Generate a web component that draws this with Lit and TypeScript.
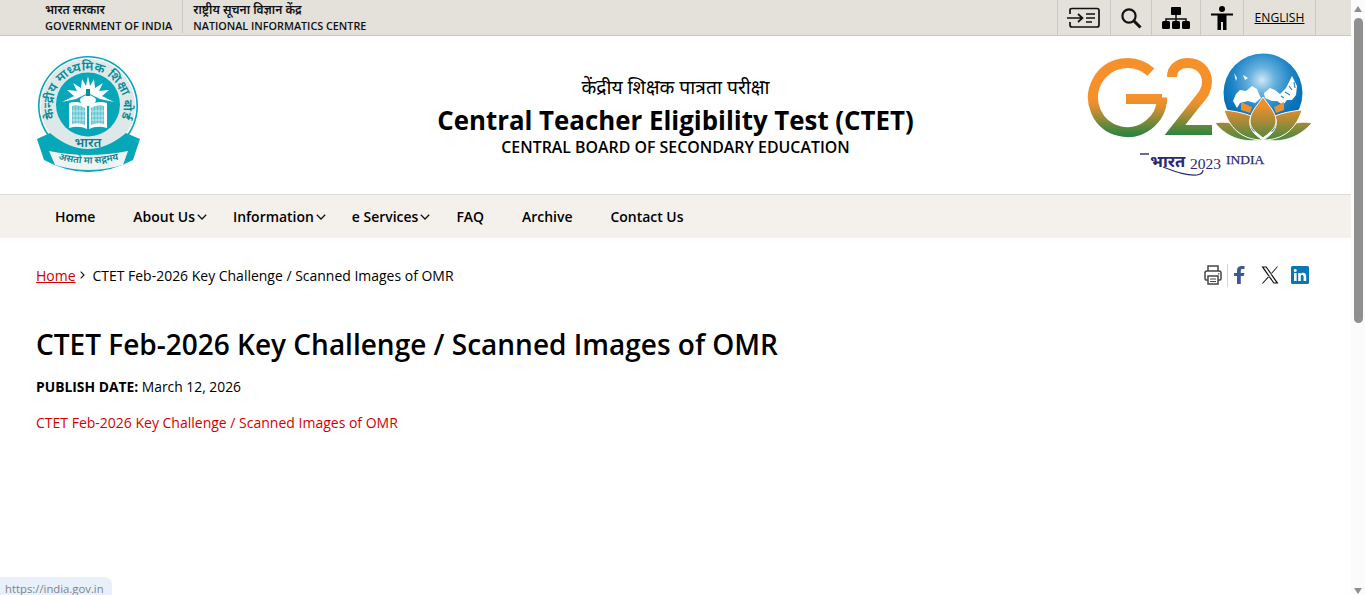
import { LitElement, html, css, svg } from "lit";
import { customElement } from "lit/decorators.js";

const emblem = svg`<svg class="emblem" viewBox="36 54 106 120" width="106" height="120" aria-hidden="true">
  <defs>
    <path id="ringText" d="M55.1 119.3 A35.5 35.5 0 1 1 120.9 119.3"/>
    <path id="ribText" d="M50 157 Q88 170 127 157"/>
  </defs>
  <circle cx="88" cy="106" r="50" fill="#06a7b8"/>
  <circle cx="88" cy="106" r="48.4" fill="#fff"/>
  <circle cx="88" cy="106" r="47" fill="#dfe8e9"/>
  <text class="ring"><textPath href="#ringText" startOffset="50%" text-anchor="middle" textLength="136" lengthAdjust="spacingAndGlyphs">केन्द्रीय माध्यमिक शिक्षा बोर्ड</textPath></text>
  <circle cx="47" cy="117" r="1.4" fill="#068c9b"/><circle cx="128" cy="117" r="1.4" fill="#068c9b"/>
  <circle cx="88" cy="104.5" r="32" fill="#06a7b8"/>
  <path d="M62 102 L74 96 L67 90 L77 91 L73 83 L81 88 L82 79 L86 86 L88 76 L90 86 L94 79 L95 88 L103 83 L99 91 L109 90 L102 96 L114 102 L100 99 L88 93 L76 99 Z" fill="#fff"/>
  <path d="M80 99 Q88 91 96 99 Q96 106 88 106 Q80 106 80 99 Z" fill="#fff"/>
  <path d="M86 89 h4 v7 h-4 Z" fill="#068c9b"/>
  <path d="M69 103 Q79 100 87 106 V129 Q79 125 69 128 Z M107 103 Q97 100 89 106 V129 Q97 125 107 128 Z" fill="#fff"/>
  <path d="M72 106 Q79 104 85 108 V125 Q79 122 72 124 Z M104 106 Q97 104 91 108 V125 Q97 122 104 124 Z" fill="#5fc3cf"/>
  <path d="M74 105 V124 M77 105 V123 M80 105 V124 M83 106 V125 M93 106 V125 M96 105 V124 M99 105 V123 M102 105 V124 M72 111 H85 M72 116 H85 M72 120 H85 M91 111 H104 M91 116 H104 M91 120 H104" stroke="#dff3f5" stroke-width=".7"/>
  <text class="bharat" x="88" y="147" text-anchor="middle">भारत</text>
  <path d="M37 139 L50 133 Q88 165 126 133 L140 139 L133 160 Q88 184 44 160 Z" fill="#06a7b8"/>
  <path d="M49 151 Q88 159 128 151 L123 165 Q88 175 55 165 Z" fill="#eef3f3"/>
  <text class="rib"><textPath href="#ribText" startOffset="50%" text-anchor="middle">असतो मा सद्गमय</textPath></text>
</svg>`;

const g20 = svg`<svg class="g20" viewBox="1087 52 226 126" width="226" height="126" aria-hidden="true">
  <defs>
    <linearGradient id="tri" gradientUnits="userSpaceOnUse" x1="0" y1="98" x2="0" y2="134">
      <stop offset="0" stop-color="#f6902b"/><stop offset=".25" stop-color="#dc8f30"/><stop offset="1" stop-color="#2f8540"/>
    </linearGradient>
    <linearGradient id="lot" gradientUnits="userSpaceOnUse" x1="0" y1="106" x2="0" y2="140">
      <stop offset="0" stop-color="#ee8f2c"/><stop offset=".45" stop-color="#a98a38"/><stop offset="1" stop-color="#4b8a3e"/>
    </linearGradient>
    <radialGradient id="globe" gradientUnits="userSpaceOnUse" cx="1262" cy="80" r="42">
      <stop offset="0" stop-color="#cfe8f7"/><stop offset=".3" stop-color="#6ab2de"/><stop offset=".7" stop-color="#1e85c7"/><stop offset="1" stop-color="#0670b6"/>
    </radialGradient>
  </defs>
  <path d="M1150.9 72.2 A34.5 34.5 0 1 0 1162 97.5 V99 H1126" fill="none" stroke="url(#tri)" stroke-width="10"/>
  <path d="M1172 77 C1172 67 1180 63 1188 63 C1198 63 1207 70 1207 82 C1207 90 1203 95 1198 101 L1175 130 H1212" fill="none" stroke="url(#tri)" stroke-width="10"/>
  <circle cx="1263" cy="93" r="39.5" fill="url(#globe)"/>
  <path d="M1236 94 L1240 90 L1246 91 L1252 86 L1257 89 L1259 94 L1261 98 L1255 103 L1248 101 L1240 103 L1237 108 L1233 101 Z M1264 93 L1270 88 L1275 90 L1280 94 L1286 88 L1292 76 L1297 86 L1296 95 L1292 100 L1287 100 L1283 105 L1277 101 L1272 101 L1265 98 Z M1243 75 L1248 78 L1245 80 Z M1234 73 L1237 78 L1236 81 Z" fill="#fff"/>
  <path d="M1289 86 L1292 90 M1285 92 L1290 95 M1294 82 L1295 88 M1281 96 L1284 98" stroke="#2a86c6" stroke-width="1.2"/>
  <path d="M1241 102 L1252 107 L1250 113 L1241 110 Z M1284 102 L1274 107 L1276 113 L1284 110 Z" fill="#ee8f2c"/>
  <path d="M1215 123 C1230 120 1246 126 1262 140 C1240 143 1226 136 1215 123 Z M1312 123 C1297 120 1280 126 1264 140 C1286 143 1300 136 1312 123 Z" fill="url(#lot)" stroke="#fff" stroke-width=".8"/>
  <path d="M1224 110 C1234 111 1244 113 1251 116 C1247 127 1253 134 1263 140 C1240 140 1229 126 1224 110 Z M1302 110 C1292 111 1282 113 1275 116 C1279 127 1273 134 1263 140 C1286 140 1297 126 1302 110 Z" fill="url(#lot)" stroke="#fff" stroke-width="1"/>
  <path d="M1263 97 C1269 106 1276 112 1276 121 C1276 129 1269 133 1263 138 C1257 133 1250 129 1250 121 C1250 112 1257 106 1263 97 Z" fill="url(#lot)" stroke="#fff" stroke-width="1"/>
  <path d="M1140 154 h9" stroke="#2b2a72" stroke-width="1.4"/>
  <text class="g-hi" x="1150" y="167">भारत</text>
  <text class="g-yr" x="1190" y="169">2023</text>
  <text class="g-in" x="1226" y="164">INDIA</text>
  <path d="M1163 167 C1174 171 1186 176 1197 175 Q1203 174 1203 170" fill="none" stroke="#2b2a72" stroke-width="1.2"/>
</svg>`;

const chevron = svg`<svg class="chev" viewBox="0 0 10 6" width="10" height="6"><path d="M.8 .8 L5 5 L9.2 .8" fill="none" stroke="#111" stroke-width="1.3"/></svg>`;

@customElement("app-root")
export class AppRoot extends LitElement {
  static styles = css`
    :host { display: block; height: 595px; overflow: hidden; position: relative; background: #fff;
      font-family: "Open Sans", "Noto Sans", "Noto Sans Devanagari", "DejaVu Sans", sans-serif; color: #000; }
    a { color: inherit; }
    .page { width: 1351px; }
    .top { height: 35px; background: #e4e1da; border-bottom: 1px solid #c9c8c3; display: flex; justify-content: space-between; padding: 0 35px 0 45px; }
    .gov { display: flex; }
    .gov > div { display: flex; flex-direction: column; font-size: 11px; font-weight: 600; line-height: 16px; padding-top: 2px; color: #111; white-space: nowrap; }
    .gov > div:first-child { padding-right: 10px; height: 31px; border-right: 1px solid #c9c8c3; margin-right: 10px; }
    .gov .hi { font-size: 12px; line-height: 16px; font-weight: 600; }
    .gov .nic { font-size: 10.8px; }
    .tools { display: flex; }
    .cell { display: flex; align-items: center; justify-content: center; border-left: 1px solid #c9c8c3; height: 35px; box-sizing: border-box; }
    .cell.i1 { width: 53px; } .cell.i2 { width: 41px; } .cell.i3 { width: 49px; } .cell.i4 { width: 43px; }
    .cell.lang { width: 73px; border-right: 1px solid #c9c8c3; font-size: 12.1px; font-weight: 400; color: #000; }
    .head { display: grid; grid-template-columns: 1fr auto 1fr; height: 158px; align-items: start; }
    .emblem { display: block; margin: 18px 0 0 36px; }
    .g20 { display: block; justify-self: end; margin: 16px 38px 0 0; }
    .title { text-align: center; padding-top: 37px; }
    .title .hi { font-size: 19.3px; line-height: 28px; }
    .title h2 { font-size: 25.85px; font-weight: 700; margin: 0; line-height: 38px; white-space: nowrap; }
    .title .sub { font-size: 15.9px; font-weight: 600; line-height: 18px; margin-top: -1px; }
    .ring { font-size: 12.5px; fill: #068c9b; font-weight: 600; }
    .bharat { font-size: 13px; fill: #0a7f8e; font-weight: 600; }
    .rib { font-size: 9.6px; fill: #0a7f8e; font-weight: 600; }
    .g-hi { font-size: 16.5px; fill: #2b2a72; font-weight: 700; }
    .g-yr { font-family: "Liberation Serif", serif; font-size: 15.5px; fill: #2b2a72; }
    .g-in { font-family: "Liberation Serif", serif; font-size: 13.5px; fill: #2b2a72; stroke: #2b2a72; stroke-width: .25px; }
    nav { height: 43px; background: #f4f1ec; border-top: 1px solid #dcdcd8; display: flex; align-items: center; padding-left: 36px; }
    nav a { padding: 0 19px; font-size: 13.96px; font-weight: 600; text-decoration: none; color: #000; display: flex; align-items: center; white-space: nowrap; }
    .chev { margin: 0 -12px 0 2px; flex: none; }
    main { padding: 0 36px; }
    .crumbs { display: flex; justify-content: space-between; align-items: center; height: 30px; margin-top: 22px; font-size: 13.97px; color: #000; }
    .trail { display: flex; align-items: center; }
    .trail a { color: #d40000; }
    .trail svg { margin: 0 7px 0 5px; }
    .share { display: flex; align-items: center; margin-right: 6px; }
    .share .print { padding-right: 5px; border-right: 1px solid #d4d4d4; height: 23px; display: flex; align-items: center; margin-right: 6px; }
    .share .x { margin: 0 12px 0 16px; }
    h1 { font-size: 28px; font-weight: 600; line-height: 38px; margin: 35px 0 0; color: #000; white-space: nowrap; }
    .date { font-size: 13.85px; line-height: 20px; margin: 14px 0 0; color: #000; }
    .date b { font-weight: 700; }
    .doc { font-size: 14px; line-height: 20px; margin: 16px 0 0; }
    .doc a { color: #d40000; text-decoration: none; }
    .status { position: absolute; left: 0; bottom: 0; width: 112px; height: 18px; box-sizing: border-box; padding: 4px 0 0 5px; background: #e9f0fa; border-top-right-radius: 8px; font-size: 11.3px; line-height: 16px; color: #7a8290; font-family: "Open Sans", sans-serif; white-space: nowrap; }
    .bar { position: absolute; top: 0; right: 0; bottom: 0; width: 14px; background: #fbfbfb; }
    .thumb { position: absolute; left: 3px; top: 18px; width: 9px; height: 305px; background: #8f8f8f; border-radius: 5px; }
    .arrow { position: absolute; left: 3px; width: 0; height: 0; border-left: 4.5px solid transparent; border-right: 4.5px solid transparent; }
    .arrow.up { top: 6px; border-bottom: 6px solid #8f8f8f; }
    .arrow.down { bottom: 1px; border-top: 6px solid #8f8f8f; }
  `;

  render() {
    return html`
      <div class="page">
        <div class="top">
          <div class="gov">
            <div><span class="hi">भारत सरकार</span><span>GOVERNMENT OF INDIA</span></div>
            <div><span class="hi">राष्ट्रीय सूचना विज्ञान केंद्र</span><span class="nic">NATIONAL INFORMATICS CENTRE</span></div>
          </div>
          <div class="tools">
            <div class="cell i1"><svg width="34" height="22" viewBox="0 0 34 22" fill="none" stroke="#111" stroke-width="1.7">
              <path d="M3 7 V3 Q3 1.5 5 1.5 H30 Q32 1.5 32 3.5 V18 Q32 20 30 20 H5 Q3 20 3 18 V15"/>
              <path d="M0 11 H15 M11 7 L15.5 11 L11 15 M19 7 H28 M19 11 H28 M19 15 H25"/></svg></div>
            <div class="cell i2"><svg width="22" height="22" viewBox="0 0 22 22" fill="none" stroke="#111"><circle cx="9" cy="9" r="6.6" stroke-width="2.2"/><path d="M14 14 L20.5 20.5" stroke-width="3"/></svg></div>
            <div class="cell i3"><svg width="28" height="22" viewBox="0 0 28 22"><path d="M14 8 V14 M4 17 V12 H24 V17" fill="none" stroke="#111" stroke-width="1.5"/><rect x="9" y="0" width="10" height="8" rx="1"/><rect x="0" y="14" width="8" height="8" rx="1.5"/><rect x="10" y="14" width="8" height="8" rx="1.5"/><rect x="20" y="14" width="8" height="8" rx="1.5"/></svg></div>
            <div class="cell i4"><svg width="22" height="24" viewBox="0 0 22 24"><circle cx="11" cy="3" r="3"/><path d="M0 7.5 H22 V9.5 H15.5 V24 H12 V16 H10 V24 H6.5 V9.5 H0 Z"/></svg></div>
            <div class="cell lang"><a href="#">ENGLISH</a></div>
          </div>
        </div>
        <header class="head">
          ${emblem}
          <div class="title">
            <div class="hi">केंद्रीय शिक्षक पात्रता परीक्षा</div>
            <h2>Central Teacher Eligibility Test (CTET)</h2>
            <div class="sub">CENTRAL BOARD OF SECONDARY EDUCATION</div>
          </div>
          ${g20}
        </header>
        <nav>
          <a href="#">Home</a>
          <a href="#">About Us${chevron}</a>
          <a href="#">Information${chevron}</a>
          <a href="#">e Services${chevron}</a>
          <a href="#">FAQ</a>
          <a href="#">Archive</a>
          <a href="#">Contact Us</a>
        </nav>
        <main>
          <div class="crumbs">
            <div class="trail"><a href="#">Home</a><svg width="5" height="8" viewBox="0 0 5 8"><path d="M.7 .7 L4 4 L.7 7.3" fill="none" stroke="#111" stroke-width="1.1"/></svg><span>CTET Feb-2026 Key Challenge / Scanned Images of OMR</span></div>
            <div class="share">
              <span class="print"><svg width="18" height="20" viewBox="0 0 18 20" fill="none" stroke="#444" stroke-width="1.5"><path d="M4 6 V1 H14 V6"/><path d="M4 15 H2 Q1 15 1 13.5 V8 Q1 6 3 6 H15 Q17 6 17 8 V13.5 Q17 15 16 15 H14"/><rect x="4" y="11" width="10" height="8"/><path d="M6 14 H12 M6 16.5 H12" stroke-width="1"/><path d="M14 8.8 h1.4" stroke-width="1.3"/></svg></span>
              <svg width="11" height="18" viewBox="0 0 11 18"><path d="M3 18 V10 H0 V7 H3 V4.5 C3 1.5 4.8 0 7.4 0 H10.5 V3 H8.4 C7.2 3 6.8 3.6 6.8 4.6 V7 H10.4 L9.8 10 H6.8 V18 Z" fill="#3b5998"/></svg>
              <svg class="x" width="18" height="18" viewBox="0 0 18 18"><path d="M.5 .5 H5.5 L17.5 17.5 H12.5 Z M2.8 1.6 L13.1 16.4 H15.2 L4.9 1.6 Z M16 .5 H17 L10.2 8.6 L9.6 7.8 Z M7.8 9.8 L8.5 10.6 L2 17.5 H.8 Z" fill="#111" fill-rule="evenodd"/></svg>
              <svg width="18" height="18" viewBox="0 0 18 18"><rect width="18" height="18" rx="1.5" fill="#0a77b5"/><path d="M3 7 H5.6 V15 H3 Z M4.3 3 A1.5 1.5 0 1 1 4.29 6 A1.5 1.5 0 0 1 4.3 3 Z M7.2 7 H9.7 V8.1 C10.2 7.3 11.1 6.8 12.2 6.8 C14.3 6.8 15.2 8.1 15.2 10.3 V15 H12.6 V10.8 C12.6 9.6 12.2 9 11.3 9 C10.4 9 9.8 9.6 9.8 10.8 V15 H7.2 Z" fill="#fff"/></svg>
            </div>
          </div>
          <h1>CTET Feb-2026 Key Challenge / Scanned Images of OMR</h1>
          <p class="date"><b>PUBLISH DATE:</b> March 12, 2026</p>
          <p class="doc"><a href="#">CTET Feb-2026 Key Challenge / Scanned Images of OMR</a></p>
        </main>
      </div>
      <div class="status">https://india.gov.in</div>
      <div class="bar"><div class="arrow up"></div><div class="thumb"></div><div class="arrow down"></div></div>
    `;
  }
}
